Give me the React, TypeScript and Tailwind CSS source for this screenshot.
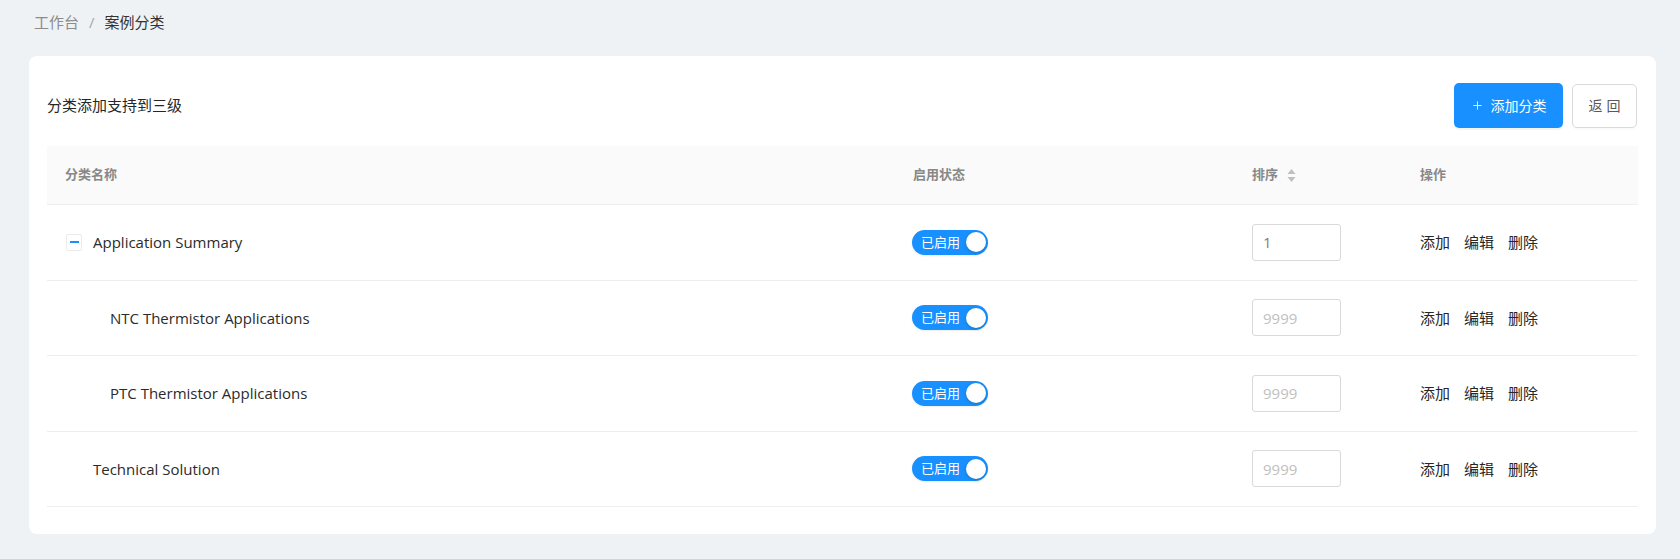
import { Plus } from "lucide-react";

type Row = {
  id: number;
  name: string;
  level: 0 | 1;
  expandable?: boolean;
  sort: string;
  placeholder?: boolean;
};

const ROWS: Row[] = [
  { id: 1, name: "Application Summary", level: 0, expandable: true, sort: "1" },
  { id: 2, name: "NTC Thermistor Applications", level: 1, sort: "9999", placeholder: true },
  { id: 3, name: "PTC Thermistor Applications", level: 1, sort: "9999", placeholder: true },
  { id: 4, name: "Technical Solution", level: 0, sort: "9999", placeholder: true },
];

const GRID = "grid grid-cols-[848px_339px_168px_1fr]";

function SortIcon() {
  return (
    <svg width="9" height="15" viewBox="0 0 9 15" className="ml-[9px]">
      <path d="M4.5 1 L8.5 6 L0.5 6 Z" fill="#bfbfbf" />
      <path d="M4.5 14 L8.5 9 L0.5 9 Z" fill="#bfbfbf" />
    </svg>
  );
}

function Switch() {
  return (
    <div className="relative flex h-[25px] w-[76px] items-center rounded-full bg-[#1890ff] shadow-[0_1px_2px_rgba(0,0,0,0.08)]">
      <span className="pl-[9px] text-[13px] leading-none text-white">已启用</span>
      <span className="absolute right-[2px] top-[2.5px] h-[20px] w-[20px] rounded-full bg-white shadow-[0_1px_3px_rgba(0,35,11,0.25)]" />
    </div>
  );
}

function ExpandIcon() {
  return (
    <span className="mr-[11px] flex h-[17px] w-[16px] items-center justify-center rounded-[2px] border border-[#ececec] bg-white">
      <span className="h-[2px] w-[9px] bg-[#1890ff]" />
    </span>
  );
}

export default function App() {
  return (
    <div
      className="min-h-screen bg-[#eff2f5] text-[#262626]"
      style={{ fontFamily: '"Open Sans", "Noto Sans CJK SC", sans-serif' }}
    >
      <div className="flex h-[56px] items-start pl-[34px] pt-[10px] text-[15px] leading-[24px]">
        <span className="text-[#8c8c8c]">工作台</span>
        <span className="mx-[10px] text-[#a6a6a6]">/</span>
        <span className="text-[#333]">案例分类</span>
      </div>

      <div className="ml-[29px] w-[1627px] rounded-[8px] bg-white px-[18px] pb-[27px] pt-[27px]">
        <div className="flex h-[45px] items-center justify-between">
          <div className="text-[15px] text-[#262626]">分类添加支持到三级</div>
          <div className="flex items-center gap-[9px] pr-px">
            <button
              type="button"
              className="flex h-[45px] w-[109px] items-center justify-center gap-[7px] rounded-[5px] bg-[#1890ff] text-[14px] text-white shadow-[0_2px_0_rgba(0,0,0,0.045)]"
            >
              <Plus size={13} strokeWidth={1.5} />
              添加分类
            </button>
            <button
              type="button"
              className="flex h-[44px] w-[65px] items-center justify-center rounded-[5px] border border-[#d9d9d9] bg-white pl-[4px] text-[14px] tracking-[4px] text-[#595959] shadow-[0_2px_0_rgba(0,0,0,0.016)]"
            >
              返回
            </button>
          </div>
        </div>

        <div className="mt-[18px]">
          <div className={`${GRID} h-[59px] items-center border-b border-[#eeeeee] bg-[#fafafa] text-[13px] font-bold text-[#888]`}>
            <div className="pl-[18px]">分类名称</div>
            <div className="pl-[18px]">启用状态</div>
            <div className="flex items-center pl-[18px]">
              排序
              <SortIcon />
            </div>
            <div className="pl-[18px]">操作</div>
          </div>

          {ROWS.map((row) => (
            <div
              key={row.id}
              className={`${GRID} h-[75.5px] items-center border-b border-[#eeeeee] text-[15px]`}
            >
              <div
                className={`flex items-center ${row.level === 1 ? "pl-[63px]" : row.expandable ? "pl-[19px]" : "pl-[46px]"}`}
              >
                {row.expandable && <ExpandIcon />}
                <span className="text-[#2b2b2b]">{row.name}</span>
              </div>
              <div className="pl-[17px]">
                <Switch />
              </div>
              <div className="pl-[18px]">
                <div
                  className={`flex h-[37px] w-[89px] items-center rounded-[3px] border border-[#d9d9d9] pl-[10px] text-[15px] ${row.placeholder ? "text-[#bfbfbf]" : "text-[#808080]"}`}
                >
                  {row.sort}
                </div>
              </div>
              <div className="flex items-center gap-[14px] pl-[18px] text-[15px] text-[#262626]">
                <span>添加</span>
                <span>编辑</span>
                <span>删除</span>
              </div>
            </div>
          ))}
        </div>
      </div>
    </div>
  );
}
